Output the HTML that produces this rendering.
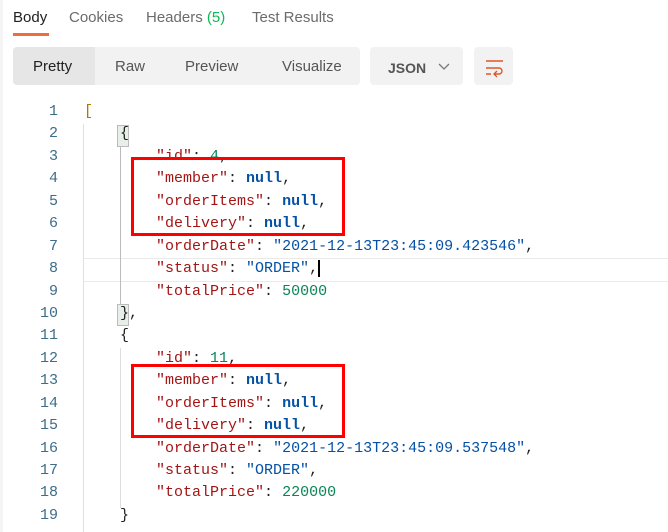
<!DOCTYPE html><html><head><style>
body{margin:0;width:668px;height:532px;background:#fff;overflow:hidden;position:relative;font-family:"Liberation Sans",sans-serif}
.tab{position:absolute;top:9px;font-size:15px;color:#6b6b6b}
.bar{position:absolute;top:47px;height:38px;background:#f2f2f2;border-radius:4px}
.btn{position:absolute;top:58px;font-size:15px;color:#555}
#code{position:absolute;left:0;top:101px;font-family:"Liberation Mono",monospace;font-size:15px;line-height:22.44px}
.ln{position:absolute;left:0;width:58px;text-align:right;color:#3d6d8a}
.c{position:absolute;left:84px;white-space:pre;color:#212121}
.k{color:#a31515}.s{color:#0451a5}.n{color:#0451a5;font-weight:bold}.g{color:#098658}.p{color:#b07800}
.box{position:absolute;border:3px solid #f00;box-sizing:border-box}
</style></head><body>
<div class="tab" style="left:13px;color:#212121">Body</div>
<div style="position:absolute;left:13px;top:33px;width:36px;height:3px;background:#f26b3a"></div>
<div class="tab" style="left:69px">Cookies</div>
<div class="tab" style="left:146px">Headers <span style="color:#0cbb52">(5)</span></div>
<div class="tab" style="left:252px">Test Results</div>
<div style="position:absolute;left:0;top:0;width:3px;height:532px;background:#f4f4f4"></div>
<div class="bar" style="left:13px;width:347px"></div>
<div class="bar" style="left:13px;width:82px;background:#e6e6e6;border-radius:4px 0 0 4px"></div>
<div class="btn" style="left:33px;color:#212121">Pretty</div>
<div class="btn" style="left:115px">Raw</div>
<div class="btn" style="left:185px">Preview</div>
<div class="btn" style="left:282px">Visualize</div>
<div class="bar" style="left:370px;width:93px"></div>
<div class="btn" style="left:388px;font-weight:bold;font-size:14px;top:60px">JSON</div>
<svg style="position:absolute;left:438px;top:63px" width="12" height="8"><path d="M1 1l5 5 5-5" stroke="#777" stroke-width="1.3" fill="none"/></svg>
<div class="bar" style="left:474px;width:39px"></div>
<svg style="position:absolute;left:484px;top:58px" width="22" height="20"><path d="M2 3h17M2 10h13a3 3 0 0 1 0 6h-4M13 13l-3 3 3 3M2 16h5" stroke="#e0562b" stroke-width="1.4" fill="none"/></svg>
<div style="position:absolute;left:83px;top:124px;width:1px;height:408px;background:#e0e0e0"></div>
<div style="position:absolute;left:84px;top:258px;width:584px;height:22px;border-top:1px solid #eaeaea;border-bottom:1px solid #eaeaea"></div>
<div style="position:absolute;left:120px;top:146px;width:1px;height:160px;background:#bbb"></div>
<div style="position:absolute;left:120px;top:348px;width:1px;height:160px;background:#ddd"></div>
<div style="position:absolute;left:117px;top:125px;width:10px;height:20px;background:#e8efe8;border:1px solid #bbb"></div>
<div style="position:absolute;left:117px;top:304px;width:10px;height:20px;background:#e8efe8;border:1px solid #bbb"></div>
<div id="code">
<div class="ln" style="top:0">1</div><div class="c" style="top:0"><span class="p">[</span></div>
<div class="ln" style="top:22.44px">2</div><div class="c" style="top:22.44px">    {</div>
<div class="ln" style="top:44.88px">3</div><div class="c" style="top:44.88px">        <span class="k">"id"</span>: <span class="g">4</span>,</div>
<div class="ln" style="top:67.32px">4</div><div class="c" style="top:67.32px">        <span class="k">"member"</span>: <span class="n">null</span>,</div>
<div class="ln" style="top:89.76px">5</div><div class="c" style="top:89.76px">        <span class="k">"orderItems"</span>: <span class="n">null</span>,</div>
<div class="ln" style="top:112.2px">6</div><div class="c" style="top:112.2px">        <span class="k">"delivery"</span>: <span class="n">null</span>,</div>
<div class="ln" style="top:134.64px">7</div><div class="c" style="top:134.64px">        <span class="k">"orderDate"</span>: <span class="s">"2021-12-13T23:45:09.423546"</span>,</div>
<div class="ln" style="top:157.08px">8</div><div class="c" style="top:157.08px">        <span class="k">"status"</span>: <span class="s">"ORDER"</span>,<span style="border-left:2px solid #000"></span></div>
<div class="ln" style="top:179.52px">9</div><div class="c" style="top:179.52px">        <span class="k">"totalPrice"</span>: <span class="g">50000</span></div>
<div class="ln" style="top:201.96px">10</div><div class="c" style="top:201.96px">    },</div>
<div class="ln" style="top:224.4px">11</div><div class="c" style="top:224.4px">    {</div>
<div class="ln" style="top:246.84px">12</div><div class="c" style="top:246.84px">        <span class="k">"id"</span>: <span class="g">11</span>,</div>
<div class="ln" style="top:269.28px">13</div><div class="c" style="top:269.28px">        <span class="k">"member"</span>: <span class="n">null</span>,</div>
<div class="ln" style="top:291.72px">14</div><div class="c" style="top:291.72px">        <span class="k">"orderItems"</span>: <span class="n">null</span>,</div>
<div class="ln" style="top:314.16px">15</div><div class="c" style="top:314.16px">        <span class="k">"delivery"</span>: <span class="n">null</span>,</div>
<div class="ln" style="top:336.6px">16</div><div class="c" style="top:336.6px">        <span class="k">"orderDate"</span>: <span class="s">"2021-12-13T23:45:09.537548"</span>,</div>
<div class="ln" style="top:359.04px">17</div><div class="c" style="top:359.04px">        <span class="k">"status"</span>: <span class="s">"ORDER"</span>,</div>
<div class="ln" style="top:381.48px">18</div><div class="c" style="top:381.48px">        <span class="k">"totalPrice"</span>: <span class="g">220000</span></div>
<div class="ln" style="top:403.92px">19</div><div class="c" style="top:403.92px">    }</div>
</div>
<div class="box" style="left:131px;top:157px;width:214px;height:79px"></div>
<div class="box" style="left:131px;top:364px;width:214px;height:74px"></div>
</body></html>
